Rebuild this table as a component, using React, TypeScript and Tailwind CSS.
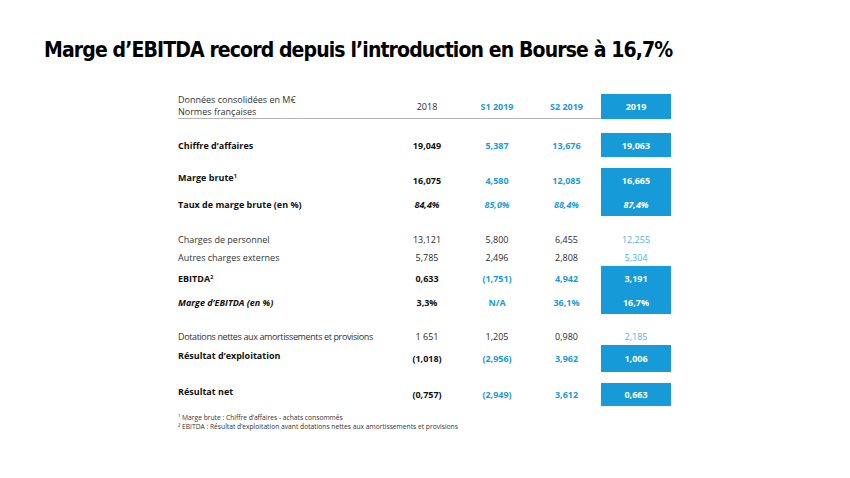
import React from "react";

type Row = {
  label: React.ReactNode;
  labelCls: string;
  h: string;
  cells: { v: string; cls: string }[];
  last: { v: string; cls: string };
};

const Group = ({ rows, box, className = "", line = false }: { rows: Row[]; box?: boolean; className?: string; line?: boolean }) => (
  <div className={`flex ${className}`}>
    <div className={`flex w-[423px] flex-col ${line ? "border-b border-[#b4b4b4]" : ""}`}>
      {rows.map((r, i) => (
        <div key={i} className={`grid grid-cols-[214px_70px_70px_69px] items-center ${r.h}`}>
          <div className={r.labelCls}>{r.label}</div>
          {r.cells.map((c, j) => (
            <div key={j} className={`text-center ${c.cls}`}>
              {c.v}
            </div>
          ))}
        </div>
      ))}
    </div>
    <div className={`flex w-[70px] flex-col ${box ? "bg-[#169bd8]" : ""}`}>
      {rows.map((r, i) => (
        <div key={i} className={`flex items-center justify-center ${r.h} ${r.last.cls}`}>
          {r.last.v}
        </div>
      ))}
    </div>
  </div>
);

const dark = "text-[#2b2b2b]";
const darkB = "font-bold text-[#111]";
const blueB = "font-bold text-[#1b9ad7]";
const lightBlue = "text-[#4fb2e4]";
const boxB = "font-bold text-white";

const App = () => {
  return (
    <div className="h-[478px] w-[850px] overflow-hidden bg-white font-['Open_Sans',sans-serif] text-[9px] leading-[11px]">
      {/* Title */}
      <h1 className="ml-[44px] mt-[37px] h-[26px] whitespace-nowrap font-['Liberation_Sans_Narrow','DejaVu_Sans_Condensed',sans-serif] text-[21px] font-bold leading-[26px] tracking-[-0.88px] text-black">
        Marge d’EBITDA record depuis l’introduction en Bourse à 16,7%
      </h1>

      <div className="ml-[178px] mt-[31px]">
        {/* Header */}
        <Group
          line
          box
          rows={[
            {
              label: (
                <div className="leading-[12px] text-[#333]">
                  <div>Données consolidées en M€</div>
                  <div>Normes françaises</div>
                </div>
              ),
              labelCls: "",
              h: "h-[24px]",
              cells: [
                { v: "2018", cls: dark },
                { v: "S1 2019", cls: blueB },
                { v: "S2 2019", cls: blueB },
              ],
              last: { v: "2019", cls: boxB },
            },
          ]}
        />

        <Group
          box
          className="mt-[14px]"
          rows={[
            {
              label: "Chiffre d’affaires",
              labelCls: darkB,
              h: "h-[24px]",
              cells: [
                { v: "19,049", cls: darkB },
                { v: "5,387", cls: blueB },
                { v: "13,676", cls: blueB },
              ],
              last: { v: "19,063", cls: boxB },
            },
          ]}
        />

        <Group
          box
          className="mt-[11px]"
          rows={[
            {
              label: (
                <span>
                  Marge brute<sup className="text-[5.5px]">1</sup>
                </span>
              ),
              labelCls: `${darkB} pb-[6px]`,
              h: "h-[24px]",
              cells: [
                { v: "16,075", cls: darkB },
                { v: "4,580", cls: blueB },
                { v: "12,085", cls: blueB },
              ],
              last: { v: "16,665", cls: boxB },
            },
            {
              label: "Taux de marge brute (en %)",
              labelCls: darkB,
              h: "h-[24px]",
              cells: [
                { v: "84,4%", cls: `${darkB} italic` },
                { v: "85,0%", cls: `${blueB} italic` },
                { v: "88,4%", cls: `${blueB} italic` },
              ],
              last: { v: "87,4%", cls: `${boxB} italic` },
            },
          ]}
        />

        <Group
          className="mt-[14px]"
          rows={[
            {
              label: "Charges de personnel",
              labelCls: "text-[#333]",
              h: "h-[18px]",
              cells: [
                { v: "13,121", cls: dark },
                { v: "5,800", cls: dark },
                { v: "6,455", cls: dark },
              ],
              last: { v: "12,255", cls: lightBlue },
            },
            {
              label: "Autres charges externes",
              labelCls: "text-[#333]",
              h: "h-[18px]",
              cells: [
                { v: "5,785", cls: dark },
                { v: "2,496", cls: dark },
                { v: "2,808", cls: dark },
              ],
              last: { v: "5,304", cls: lightBlue },
            },
          ]}
        />

        <Group
          box
          rows={[
            {
              label: (
                <span>
                  EBITDA<sup className="text-[5.5px]">2</sup>
                </span>
              ),
              labelCls: darkB,
              h: "h-[24px]",
              cells: [
                { v: "0,633", cls: darkB },
                { v: "(1,751)", cls: blueB },
                { v: "4,942", cls: blueB },
              ],
              last: { v: "3,191", cls: boxB },
            },
            {
              label: "Marge d’EBITDA (en %)",
              labelCls: `${darkB} italic`,
              h: "h-[24px]",
              cells: [
                { v: "3,3%", cls: darkB },
                { v: "N/A", cls: blueB },
                { v: "36,1%", cls: blueB },
              ],
              last: { v: "16,7%", cls: boxB },
            },
          ]}
        />

        <Group
          className="mt-[13px]"
          rows={[
            {
              label: "Dotations nettes aux amortissements et provisions",
              labelCls: "whitespace-nowrap tracking-[-0.38px] text-[#333]",
              h: "h-[18px]",
              cells: [
                { v: "1 651", cls: dark },
                { v: "1,205", cls: dark },
                { v: "0,980", cls: dark },
              ],
              last: { v: "2,185", cls: lightBlue },
            },
          ]}
        />

        <Group
          box
          rows={[
            {
              label: "Résultat d’exploitation",
              labelCls: `${darkB} pb-[7px]`,
              h: "h-[27px]",
              cells: [
                { v: "(1,018)", cls: darkB },
                { v: "(2,956)", cls: blueB },
                { v: "3,962", cls: blueB },
              ],
              last: { v: "1,006", cls: boxB },
            },
          ]}
        />

        <Group
          box
          className="mt-[11px]"
          rows={[
            {
              label: "Résultat net",
              labelCls: `${darkB} pb-[7px]`,
              h: "h-[23px]",
              cells: [
                { v: "(0,757)", cls: darkB },
                { v: "(2,949)", cls: blueB },
                { v: "3,612", cls: blueB },
              ],
              last: { v: "0,663", cls: boxB },
            },
          ]}
        />

        {/* Footnotes */}
        <div className="mt-[7px] text-[6.7px] leading-[9px] text-[#333]">
          <div>¹ Marge brute : Chiffre d’affaires - achats consommés</div>
          <div>² EBITDA : Résultat d’exploitation avant dotations nettes aux amortissements et provisions</div>
        </div>
      </div>
    </div>
  );
};

export default App;
